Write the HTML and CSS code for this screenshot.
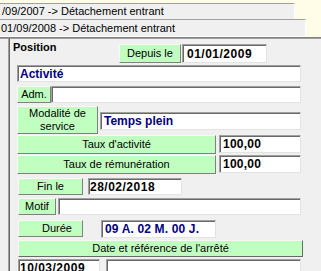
FILE: index.html
```html
<!DOCTYPE html>
<html lang="fr">
<head>
<meta charset="utf-8">
<title>Position</title>
<link rel="stylesheet" href="styles.css">
</head>
<body>
<div class="list">
  <div class="list-row r1">/09/2007 -&gt; Détachement entrant</div>
  <div class="list-row r2">01/09/2008 -&gt; Détachement entrant</div>
</div>
<div class="main">
  <div class="strip"></div>
  <div class="panel">
    <div class="row head">
      <div class="title">Position</div>
      <div class="btn b-depuis"><span>Depuis le</span></div>
      <div class="field f-depuis dark"><span>01/01/2009</span></div>
    </div>
    <div class="row r-act">
      <div class="field f-act navy"><span>Activité</span></div>
    </div>
    <div class="row r-adm">
      <div class="btn b-adm"><span>Adm.</span></div>
      <div class="field f-adm"></div>
    </div>
    <div class="row r-mod">
      <div class="btn b-mod"><span class="two">Modalité de<br>service</span></div>
      <div class="field f-mod navy"><span>Temps plein</span></div>
    </div>
    <div class="row r-taux">
      <div class="btn b-taux"><span>Taux d'activité</span></div>
      <div class="field f-taux dark"><span>100,00</span></div>
    </div>
    <div class="row r-taux">
      <div class="btn b-taux"><span>Taux de rémunération</span></div>
      <div class="field f-taux dark"><span>100,00</span></div>
    </div>
    <div class="row r-fin">
      <div class="btn b-fin"><span>Fin le</span></div>
      <div class="field f-fin dark"><span>28/02/2018</span></div>
    </div>
    <div class="row r-motif">
      <div class="btn b-motif"><span>Motif</span></div>
      <div class="field f-motif"></div>
    </div>
    <div class="row r-duree">
      <div class="btn b-duree"><span>Durée</span></div>
      <div class="field f-duree navy"><span>09 A. 02 M. 00 J.</span></div>
    </div>
    <div class="row r-ref">
      <div class="btn b-ref"><span>Date et référence de l'arrêté</span></div>
    </div>
    <div class="row r-bottom">
      <div class="field f-date dark"><span>10/03/2009</span></div>
      <div class="field f-ref"></div>
    </div>
  </div>
</div>
</body>
</html>
```
FILE: styles.css
```css
* { box-sizing: border-box; }
html, body { margin: 0; padding: 0; }
body {
  width: 321px;
  height: 271px;
  overflow: hidden;
  background: #fffde8;
  font-family: "Liberation Sans", Arial, sans-serif;
  font-size: 11px;
  color: #000;
}
.list { padding-top: 3px; }
.list-row {
  background: #f0f0f0;
  border-top: 1px solid #a0a0a0;
  border-right: 1px solid #ffffff;
  white-space: nowrap;
  overflow: hidden;
}
.r1 { width: 295px; height: 16px; line-height: 15px; padding-left: 2px; }
.r2 { width: 306px; height: 18px; line-height: 16px; padding-left: 1px; border-bottom: 1px solid #ffffff; }
.main {
  display: flex;
  height: 234px;
  background: #f0f0f0;
  border-top: 1px solid #808080;
  box-shadow: inset 0 1px 0 #a0a0a0;
}
.strip { width: 8px; flex: none; }
.panel {
  flex: 1;
  border-left: 1px solid #a0a0a0;
  box-shadow: inset 1px 0 0 #696969, inset 0 1px 0 #a0a0a0;
  padding: 2px 0 0 8px;
  display: flex;
  flex-direction: column;
}
.row { display: flex; align-items: flex-start; flex: none; }
.btn {
  background: #c0ffc0;
  border: 1px solid;
  border-color: #f8f8f8 #808080 #808080 #f8f8f8;
  display: flex;
  align-items: center;
  justify-content: center;
  overflow: hidden;
  flex: none;
}
.btn span { display: block; text-align: center; line-height: 13px; white-space: nowrap; }
.field {
  background: #ffffff;
  border-top: 1px solid #a0a0a0;
  border-left: 1px solid #a0a0a0;
  border-right: 1px solid #e3e3e3;
  border-bottom: 1px solid #e3e3e3;
  box-shadow: inset 1px 1px 0 #696969;
  display: flex;
  align-items: center;
  padding-left: 3px;
  font-size: 12px;
  font-weight: bold;
  overflow: hidden;
  flex: none;
}
.field span { display: block; white-space: nowrap; }
.navy { color: #000080; }
.dark { color: #000; }
.head { height: 23px; margin-left: -4px; }
.title { width: 106px; flex: none; font-weight: bold; line-height: 13px; padding-top: 1px; }
.b-depuis { width: 62px; height: 19px; margin-top: 4px; }
.f-depuis { width: 85px; height: 19px; margin-top: 4px; margin-left: 1px; padding-left: 4px; letter-spacing: 0.5px; }
.r-act { margin-top: 2px; }
.f-act { width: 284px; height: 17px; padding-left: 2px; }
.r-adm { margin-top: 4px; }
.b-adm { width: 34px; height: 17px; }
.f-adm { width: 250px; height: 17px; }
.r-mod { margin-top: 3px; }
.b-mod { width: 81px; height: 28px; }
.f-mod { width: 201px; height: 18px; margin-top: 6px; margin-left: 2px; }
.r-taux { margin-top: 1px; }
.b-taux { width: 199px; height: 19px; }
.f-taux { width: 82px; height: 18px; margin-left: 3px; letter-spacing: 0.25px; }
.r-fin { margin-top: 4px; margin-left: 1px; }
.b-fin { width: 65px; height: 17px; }
.f-fin { width: 94px; height: 17px; margin-left: 5px; padding-left: 1px; letter-spacing: 0.5px; }
.r-motif { margin-top: 3px; margin-left: 1px; }
.b-motif { width: 38px; height: 17px; }
.f-motif { width: 243px; height: 17px; margin-left: 2px; }
.r-duree { margin-top: 5px; margin-left: 1px; }
.b-duree { width: 65px; height: 17px; padding-left: 13px; }
.f-duree { width: 115px; height: 18px; margin-left: 18px; letter-spacing: 0.15px; }
.r-ref { margin-top: 2px; margin-left: 1px; }
.b-ref { width: 285px; height: 17px; border-color: #f8f8f8 #696969 #696969 #f8f8f8; }
.r-bottom { margin-top: 2px; margin-left: 1px; }
.f-date { width: 82px; height: 18px; padding-left: 1px; letter-spacing: 0.5px; align-items: flex-start; line-height: 17px; }
.f-ref { width: 195px; height: 18px; margin-left: 6px; }
```
